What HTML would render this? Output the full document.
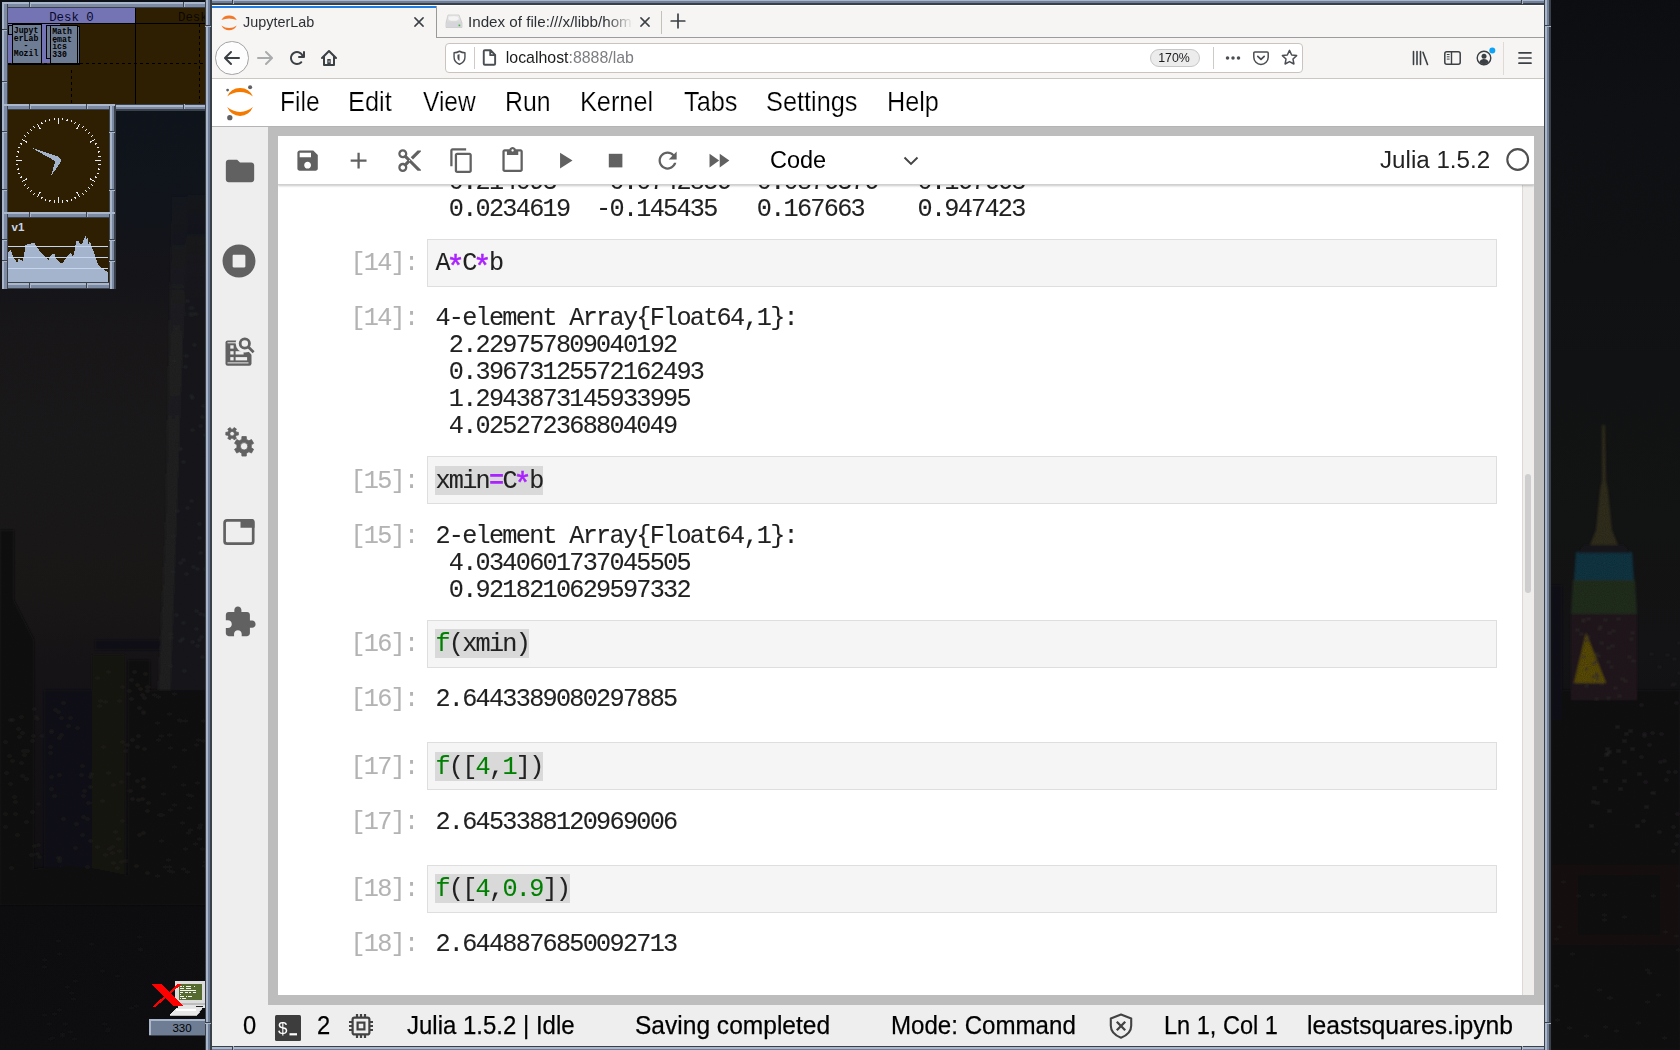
<!DOCTYPE html>
<html>
<head>
<meta charset="utf-8">
<title>JupyterLab</title>
<style>
*{box-sizing:border-box;margin:0;padding:0}
html,body{width:1680px;height:1050px;overflow:hidden}
body{position:relative;font-family:"Liberation Sans",sans-serif;background:#0d1116;}
.abs{position:absolute}
.ff{font-family:"Liberation Sans",sans-serif;white-space:pre;line-height:20px}
#bg{position:absolute;left:0;top:0;width:1680px;height:1050px;overflow:hidden;
 background:
  linear-gradient(to bottom,#0b1016 0px,#0d1217 250px,#14161a 420px,#1a1816 600px,#15151a 800px,#0c0d10 900px,#090a0c 1050px);}
/* fvwm frames */
.frame{position:absolute;background:#8796ad;}
.well{position:absolute;background:#2f1f02;}
/* window */
#win{position:absolute;left:205px;top:0;width:1346px;height:1050px;
 background:
  linear-gradient(to right,#3a4048 0 1px,#aab7ca 1px 3px,#71809a 3px 5px,#3a4048 5px 7px,transparent 7px) left/7px 100% no-repeat,
  linear-gradient(to right,#3a4048 0 1px,#aab7ca 1px 3px,#71809a 3px 5px,#3a4048 5px 7px) right/7px 100% no-repeat,
  linear-gradient(to bottom,#aab7ca 0 1px,#71809a 1px 3px,#3a4048 3px 5px,#fff 5px 6px,transparent 6px) top/100% 6px no-repeat,
  linear-gradient(to bottom,#3a4048 0 1px,#aab7ca 1px 3px,#71809a 3px 4px) bottom/100% 4px no-repeat,#fff;}
.nh{position:absolute;width:6px;height:2px;background:linear-gradient(to bottom,#3a4048 0 1px,#aab7ca 1px 2px)}
.nv{position:absolute;width:2px;height:4px;background:linear-gradient(to right,#3a4048 0 1px,#aab7ca 1px 2px)}
#content{position:absolute;left:7px;top:6px;width:1332px;height:1040px;background:#fff;overflow:hidden;will-change:transform}
#tabbar{position:absolute;left:0;top:0;width:1332px;height:32px;background:#f6f5f3;}
#navbar{position:absolute;left:0;top:32px;width:1332px;height:41px;background:#f6f5f3;border-bottom:1px solid #cdc7c2}
#menubar{position:absolute;left:0;top:73px;width:1332px;height:48px;background:#fff;border-bottom:1px solid #b4b4b4}
#dock{position:absolute;left:56px;top:121px;width:1276px;height:878px;background:#bdbdbd}
#side{position:absolute;left:0;top:121px;width:56px;height:878px;background:#eeeeee}
#panel{position:absolute;left:66px;top:130px;width:1256px;height:859px;background:#fff;overflow:hidden;will-change:transform}
#nbtool{position:absolute;left:0;top:0;width:1256px;height:49px;background:#fff;border-bottom:1px solid #d0d0d0;box-shadow:0 1px 2px rgba(0,0,0,.22);z-index:3}
#status{position:absolute;left:0;top:999px;width:1332px;height:41px;background:#eeeeee}
.mono{position:absolute;font-family:"Liberation Mono",monospace;font-size:25.2px;letter-spacing:-1.723px;-webkit-text-stroke:0.08px currentColor;white-space:pre;color:#212121;line-height:27px}
.mono.pr{color:#b3b3b3}
.mono b{font-weight:bold}
.mono b.star{display:inline-block;width:13.4px;height:20px;font-size:31px;line-height:20px;letter-spacing:0;text-indent:-2.6px;vertical-align:baseline;position:relative;top:6.5px;font-weight:normal;-webkit-text-stroke:0.5px currentColor}
.inp{position:absolute;left:149px;width:1070px;height:48px;background:#f5f5f5;border:1px solid #dedede}
.hl{position:absolute;background:#d9d9d9}
.op{color:#aa22ff;font-weight:bold}
.fn{color:#008000}
.menu{-webkit-text-stroke:0.22px #fff;position:absolute;top:7.8px;font-size:27.6px;color:#000;line-height:30px;white-space:pre;transform:scaleX(.9);transform-origin:0 0}
.st{-webkit-text-stroke:0.25px #000;position:absolute;top:5px;font-size:26.4px;color:#000;line-height:30px;white-space:pre;transform:scaleX(.9);transform-origin:0 0}
</style>
</head>
<body>
<div id="bg"><svg id="bgs" class="abs" style="left:0;top:0" width="1680" height="1050" viewBox="0 0 1680 1050">
<defs>
<linearGradient id="gl" x1="0" y1="0" x2="0" y2="1">
<stop offset="0" stop-color="#0a1018"/><stop offset=".1" stop-color="#0d151e"/><stop offset=".2" stop-color="#10151d"/><stop offset=".27" stop-color="#16151a"/><stop offset=".33" stop-color="#1a1819"/><stop offset=".42" stop-color="#1b1a1b"/><stop offset=".56" stop-color="#1b1917"/><stop offset=".64" stop-color="#161316"/><stop offset=".8" stop-color="#110f13"/><stop offset=".86" stop-color="#0b0b0e"/><stop offset="1" stop-color="#0c0c0f"/>
</linearGradient>
<linearGradient id="gr" x1="0" y1="0" x2="0" y2="1">
<stop offset="0" stop-color="#0a0c0f"/><stop offset=".1" stop-color="#0d0f12"/><stop offset=".35" stop-color="#101213"/><stop offset=".5" stop-color="#121313"/><stop offset=".62" stop-color="#131214"/><stop offset=".8" stop-color="#0e0e11"/><stop offset="1" stop-color="#0b0b0e"/>
</linearGradient>
<filter id="bl" x="-5%" y="-5%" width="110%" height="110%"><feGaussianBlur stdDeviation="1.200"/></filter>
<filter id="bl3" x="-50%" y="-100%" width="200%" height="300%"><feGaussianBlur stdDeviation="14"/></filter>
<linearGradient id="tw" gradientUnits="userSpaceOnUse" x1="0" y1="195" x2="0" y2="700"><stop offset="0" stop-color="#1c1d22" stop-opacity=".15"/><stop offset=".25" stop-color="#212124" stop-opacity=".9"/><stop offset="1" stop-color="#222223"/></linearGradient>
<linearGradient id="tw2" gradientUnits="userSpaceOnUse" x1="0" y1="195" x2="0" y2="700"><stop offset="0" stop-color="#16171c" stop-opacity=".15"/><stop offset=".25" stop-color="#18181b" stop-opacity=".9"/><stop offset="1" stop-color="#18181a"/></linearGradient>
<filter id="nz" x="0" y="0" width="100%" height="100%"><feTurbulence type="fractalNoise" baseFrequency="0.045 0.03" numOctaves="3" seed="7"/><feColorMatrix type="matrix" values="0 0 0 0 0.16  0 0 0 0 0.13  0 0 0 0 0.12  0.9 0.5 0 0 -0.52"/></filter>
<filter id="nz2" x="0" y="0" width="100%" height="100%" color-interpolation-filters="sRGB"><feTurbulence type="fractalNoise" baseFrequency="0.9" numOctaves="1" seed="2"/><feColorMatrix type="matrix" values="0 0 0 0 0.075  0 0 0 0 0.07  0 0 0 0 0.08  0 0 0 0.5 0"/></filter>
</defs>
<rect x="0" y="0" width="216" height="1050" fill="url(#gl)"/>
<rect x="1540" y="0" width="140" height="1050" fill="url(#gr)"/>
<g filter="url(#bl)">
<path d="M172 195L206 195L206 700L158 700L166 520Z" fill="url(#tw)"/>
<path d="M188 195L206 195L206 700L170 700Z" fill="url(#tw2)"/>
<path d="M0 530L14 530L14 600L34 640L34 900L0 900Z" fill="#0f0f11"/>
<path d="M44 690L92 690L92 900L44 900Z" fill="#100f12"/>
<path d="M92 655L125 655L125 900L92 900Z" fill="#131211"/>
<path d="M128 660L150 660L150 900L128 900Z" fill="#0f0e10"/>
<path d="M150 690L206 690L206 900L150 900Z" fill="#0e0e10"/>
<path d="M95 640L160 640L160 650L95 650Z" fill="#0f1115"/>
<rect x="11" y="719" width="3" height="2" fill="#23211f"/>
<rect x="17" y="728" width="3" height="2" fill="#23211f"/>
<rect x="5" y="772" width="3" height="2" fill="#23211f"/>
<rect x="37" y="844" width="3" height="2" fill="#23211f"/>
<rect x="31" y="740" width="3" height="2" fill="#23211f"/>
<rect x="22" y="750" width="3" height="2" fill="#23211f"/>
<rect x="9" y="719" width="3" height="2" fill="#23211f"/>
<rect x="10" y="867" width="3" height="2" fill="#23211f"/>
<rect x="33" y="845" width="3" height="2" fill="#23211f"/>
<rect x="32" y="735" width="3" height="2" fill="#23211f"/>
<rect x="14" y="813" width="3" height="2" fill="#23211f"/>
<rect x="30" y="854" width="3" height="2" fill="#23211f"/>
<rect x="35" y="716" width="3" height="2" fill="#23211f"/>
<rect x="25" y="821" width="3" height="2" fill="#23211f"/>
<rect x="21" y="732" width="3" height="2" fill="#23211f"/>
<rect x="20" y="716" width="3" height="2" fill="#23211f"/>
<rect x="38" y="856" width="3" height="2" fill="#23211f"/>
<rect x="23" y="754" width="3" height="2" fill="#23211f"/>
<rect x="37" y="803" width="3" height="2" fill="#23211f"/>
<rect x="36" y="853" width="3" height="2" fill="#23211f"/>
<rect x="21" y="775" width="3" height="2" fill="#23211f"/>
<rect x="25" y="778" width="3" height="2" fill="#23211f"/>
<rect x="8" y="755" width="3" height="2" fill="#23211f"/>
<rect x="33" y="708" width="3" height="2" fill="#23211f"/>
<rect x="4" y="813" width="3" height="2" fill="#23211f"/>
<rect x="13" y="796" width="3" height="2" fill="#23211f"/>
<rect x="20" y="762" width="3" height="2" fill="#23211f"/>
<rect x="40" y="735" width="3" height="2" fill="#23211f"/>
<rect x="18" y="736" width="3" height="2" fill="#23211f"/>
<rect x="26" y="750" width="3" height="2" fill="#23211f"/>
<rect x="16" y="834" width="3" height="2" fill="#23211f"/>
<rect x="14" y="801" width="3" height="2" fill="#23211f"/>
<rect x="36" y="718" width="3" height="2" fill="#23211f"/>
<rect x="4" y="741" width="3" height="2" fill="#23211f"/>
<rect x="31" y="811" width="3" height="2" fill="#23211f"/>
<rect x="11" y="760" width="3" height="2" fill="#23211f"/>
<rect x="9" y="783" width="3" height="2" fill="#23211f"/>
<rect x="4" y="826" width="3" height="2" fill="#23211f"/>
<rect x="36" y="872" width="3" height="2" fill="#23211f"/>
<rect x="30" y="873" width="3" height="2" fill="#23211f"/>
<rect x="49" y="752" width="3" height="2" fill="#22201e"/>
<rect x="89" y="840" width="3" height="2" fill="#22201e"/>
<rect x="65" y="870" width="3" height="2" fill="#22201e"/>
<rect x="74" y="847" width="3" height="2" fill="#22201e"/>
<rect x="60" y="734" width="3" height="2" fill="#22201e"/>
<rect x="67" y="725" width="3" height="2" fill="#22201e"/>
<rect x="64" y="873" width="3" height="2" fill="#22201e"/>
<rect x="62" y="702" width="3" height="2" fill="#22201e"/>
<rect x="50" y="731" width="3" height="2" fill="#22201e"/>
<rect x="81" y="765" width="3" height="2" fill="#22201e"/>
<rect x="60" y="717" width="3" height="2" fill="#22201e"/>
<rect x="89" y="776" width="3" height="2" fill="#22201e"/>
<rect x="57" y="711" width="3" height="2" fill="#22201e"/>
<rect x="50" y="730" width="3" height="2" fill="#22201e"/>
<rect x="76" y="727" width="3" height="2" fill="#22201e"/>
<rect x="50" y="788" width="3" height="2" fill="#22201e"/>
<rect x="58" y="880" width="3" height="2" fill="#22201e"/>
<rect x="53" y="795" width="3" height="2" fill="#22201e"/>
<rect x="80" y="774" width="3" height="2" fill="#22201e"/>
<rect x="89" y="786" width="3" height="2" fill="#22201e"/>
<rect x="58" y="774" width="3" height="2" fill="#22201e"/>
<rect x="50" y="776" width="3" height="2" fill="#22201e"/>
<rect x="58" y="860" width="3" height="2" fill="#22201e"/>
<rect x="83" y="790" width="3" height="2" fill="#22201e"/>
<rect x="49" y="746" width="3" height="2" fill="#22201e"/>
<rect x="58" y="737" width="3" height="2" fill="#22201e"/>
<rect x="58" y="857" width="3" height="2" fill="#22201e"/>
<rect x="54" y="709" width="3" height="2" fill="#22201e"/>
<rect x="87" y="802" width="3" height="2" fill="#22201e"/>
<rect x="90" y="773" width="3" height="2" fill="#22201e"/>
<rect x="86" y="818" width="3" height="2" fill="#22201e"/>
<rect x="81" y="834" width="3" height="2" fill="#22201e"/>
<rect x="69" y="717" width="3" height="2" fill="#22201e"/>
<rect x="57" y="857" width="3" height="2" fill="#22201e"/>
<rect x="86" y="866" width="3" height="2" fill="#22201e"/>
<rect x="62" y="818" width="3" height="2" fill="#22201e"/>
<rect x="82" y="816" width="3" height="2" fill="#22201e"/>
<rect x="82" y="795" width="3" height="2" fill="#22201e"/>
<rect x="75" y="823" width="3" height="2" fill="#22201e"/>
<rect x="59" y="866" width="3" height="2" fill="#22201e"/>
<rect x="146" y="686" width="3" height="2" fill="#25231f"/>
<rect x="146" y="872" width="3" height="2" fill="#25231f"/>
<rect x="130" y="679" width="3" height="2" fill="#25231f"/>
<rect x="143" y="697" width="3" height="2" fill="#25231f"/>
<rect x="146" y="810" width="3" height="2" fill="#25231f"/>
<rect x="98" y="705" width="3" height="2" fill="#25231f"/>
<rect x="129" y="790" width="3" height="2" fill="#25231f"/>
<rect x="135" y="865" width="3" height="2" fill="#25231f"/>
<rect x="107" y="671" width="3" height="2" fill="#25231f"/>
<rect x="144" y="673" width="3" height="2" fill="#25231f"/>
<rect x="141" y="694" width="3" height="2" fill="#25231f"/>
<rect x="138" y="834" width="3" height="2" fill="#25231f"/>
<rect x="142" y="786" width="3" height="2" fill="#25231f"/>
<rect x="142" y="712" width="3" height="2" fill="#25231f"/>
<rect x="131" y="739" width="3" height="2" fill="#25231f"/>
<rect x="142" y="832" width="3" height="2" fill="#25231f"/>
<rect x="120" y="781" width="3" height="2" fill="#25231f"/>
<rect x="96" y="677" width="3" height="2" fill="#25231f"/>
<rect x="127" y="773" width="3" height="2" fill="#25231f"/>
<rect x="141" y="798" width="3" height="2" fill="#25231f"/>
<rect x="102" y="746" width="3" height="2" fill="#25231f"/>
<rect x="136" y="780" width="3" height="2" fill="#25231f"/>
<rect x="96" y="846" width="3" height="2" fill="#25231f"/>
<rect x="139" y="688" width="3" height="2" fill="#25231f"/>
<rect x="124" y="750" width="3" height="2" fill="#25231f"/>
<rect x="137" y="735" width="3" height="2" fill="#25231f"/>
<rect x="107" y="772" width="3" height="2" fill="#25231f"/>
<rect x="146" y="690" width="3" height="2" fill="#25231f"/>
<rect x="101" y="800" width="3" height="2" fill="#25231f"/>
<rect x="142" y="778" width="3" height="2" fill="#25231f"/>
<rect x="118" y="850" width="3" height="2" fill="#25231f"/>
<rect x="136" y="684" width="3" height="2" fill="#25231f"/>
<rect x="142" y="711" width="3" height="2" fill="#25231f"/>
<rect x="111" y="846" width="3" height="2" fill="#25231f"/>
<rect x="117" y="838" width="3" height="2" fill="#25231f"/>
<rect x="104" y="854" width="3" height="2" fill="#25231f"/>
<rect x="104" y="701" width="3" height="2" fill="#25231f"/>
<rect x="121" y="741" width="3" height="2" fill="#25231f"/>
<rect x="124" y="860" width="3" height="2" fill="#25231f"/>
<rect x="133" y="671" width="3" height="2" fill="#25231f"/>
<rect x="112" y="784" width="3" height="2" fill="#25231f"/>
<rect x="121" y="820" width="3" height="2" fill="#25231f"/>
<rect x="121" y="686" width="3" height="2" fill="#25231f"/>
<rect x="108" y="848" width="3" height="2" fill="#25231f"/>
<rect x="114" y="831" width="3" height="2" fill="#25231f"/>
<rect x="147" y="802" width="3" height="2" fill="#25231f"/>
<rect x="131" y="798" width="3" height="2" fill="#25231f"/>
<rect x="112" y="862" width="3" height="2" fill="#25231f"/>
<rect x="120" y="861" width="3" height="2" fill="#25231f"/>
<rect x="111" y="852" width="3" height="2" fill="#25231f"/>
<rect x="137" y="799" width="3" height="2" fill="#25231f"/>
<rect x="118" y="700" width="3" height="2" fill="#25231f"/>
<rect x="136" y="746" width="3" height="2" fill="#25231f"/>
<rect x="130" y="698" width="3" height="2" fill="#25231f"/>
<rect x="99" y="700" width="3" height="2" fill="#25231f"/>
<rect x="138" y="707" width="3" height="2" fill="#25231f"/>
<rect x="143" y="748" width="3" height="2" fill="#25231f"/>
<rect x="126" y="744" width="3" height="2" fill="#25231f"/>
<rect x="128" y="690" width="3" height="2" fill="#25231f"/>
<rect x="116" y="867" width="3" height="2" fill="#25231f"/>
<rect x="161" y="814" width="3" height="2" fill="#1f1e1e"/>
<rect x="169" y="747" width="3" height="2" fill="#1f1e1e"/>
<rect x="153" y="694" width="3" height="2" fill="#1f1e1e"/>
<rect x="201" y="848" width="3" height="2" fill="#1f1e1e"/>
<rect x="194" y="843" width="3" height="2" fill="#1f1e1e"/>
<rect x="202" y="720" width="3" height="2" fill="#1f1e1e"/>
<rect x="182" y="784" width="3" height="2" fill="#1f1e1e"/>
<rect x="182" y="868" width="3" height="2" fill="#1f1e1e"/>
<rect x="192" y="874" width="3" height="2" fill="#1f1e1e"/>
<rect x="158" y="814" width="3" height="2" fill="#1f1e1e"/>
<rect x="187" y="832" width="3" height="2" fill="#1f1e1e"/>
<rect x="184" y="848" width="3" height="2" fill="#1f1e1e"/>
<rect x="168" y="866" width="3" height="2" fill="#1f1e1e"/>
<rect x="173" y="804" width="3" height="2" fill="#1f1e1e"/>
<rect x="199" y="824" width="3" height="2" fill="#1f1e1e"/>
<rect x="168" y="734" width="3" height="2" fill="#1f1e1e"/>
<rect x="169" y="809" width="3" height="2" fill="#1f1e1e"/>
<rect x="204" y="861" width="3" height="2" fill="#1f1e1e"/>
<rect x="173" y="766" width="3" height="2" fill="#1f1e1e"/>
<rect x="195" y="744" width="3" height="2" fill="#1f1e1e"/>
<rect x="173" y="693" width="3" height="2" fill="#1f1e1e"/>
<rect x="162" y="793" width="3" height="2" fill="#1f1e1e"/>
<rect x="188" y="807" width="3" height="2" fill="#1f1e1e"/>
<rect x="171" y="871" width="3" height="2" fill="#1f1e1e"/>
<rect x="184" y="720" width="3" height="2" fill="#1f1e1e"/>
<rect x="156" y="875" width="3" height="2" fill="#1f1e1e"/>
<rect x="203" y="865" width="3" height="2" fill="#1f1e1e"/>
<rect x="183" y="749" width="3" height="2" fill="#1f1e1e"/>
<rect x="157" y="739" width="3" height="2" fill="#1f1e1e"/>
<rect x="164" y="866" width="3" height="2" fill="#1f1e1e"/>
<rect x="198" y="838" width="3" height="2" fill="#1f1e1e"/>
<rect x="160" y="735" width="3" height="2" fill="#1f1e1e"/>
<rect x="168" y="870" width="3" height="2" fill="#1f1e1e"/>
<rect x="160" y="840" width="3" height="2" fill="#1f1e1e"/>
<rect x="187" y="794" width="3" height="2" fill="#1f1e1e"/>
<rect x="202" y="740" width="3" height="2" fill="#1f1e1e"/>
<rect x="179" y="720" width="3" height="2" fill="#1f1e1e"/>
<rect x="157" y="696" width="3" height="2" fill="#1f1e1e"/>
<rect x="168" y="713" width="3" height="2" fill="#1f1e1e"/>
<rect x="155" y="879" width="3" height="2" fill="#1f1e1e"/>
<rect x="167" y="859" width="3" height="2" fill="#1f1e1e"/>
<rect x="189" y="829" width="3" height="2" fill="#1f1e1e"/>
<rect x="186" y="871" width="3" height="2" fill="#1f1e1e"/>
<rect x="198" y="827" width="3" height="2" fill="#1f1e1e"/>
<rect x="181" y="822" width="3" height="2" fill="#1f1e1e"/>
<rect x="190" y="795" width="3" height="2" fill="#1f1e1e"/>
<rect x="178" y="719" width="3" height="2" fill="#1f1e1e"/>
<rect x="196" y="782" width="3" height="2" fill="#1f1e1e"/>
<rect x="156" y="722" width="3" height="2" fill="#1f1e1e"/>
<rect x="197" y="739" width="3" height="2" fill="#1f1e1e"/>
<rect x="182" y="559" width="3" height="2" fill="#282929"/>
<rect x="199" y="425" width="3" height="2" fill="#282929"/>
<rect x="182" y="461" width="3" height="2" fill="#282929"/>
<rect x="169" y="633" width="3" height="2" fill="#282929"/>
<rect x="169" y="665" width="3" height="2" fill="#282929"/>
<rect x="173" y="360" width="3" height="2" fill="#282929"/>
<rect x="199" y="613" width="3" height="2" fill="#282929"/>
<rect x="176" y="510" width="3" height="2" fill="#282929"/>
<rect x="185" y="573" width="3" height="2" fill="#282929"/>
<rect x="175" y="614" width="3" height="2" fill="#282929"/>
<rect x="204" y="568" width="3" height="2" fill="#282929"/>
<rect x="201" y="656" width="3" height="2" fill="#282929"/>
<rect x="182" y="622" width="3" height="2" fill="#282929"/>
<rect x="198" y="523" width="3" height="2" fill="#282929"/>
<rect x="172" y="535" width="3" height="2" fill="#282929"/>
<rect x="201" y="416" width="3" height="2" fill="#282929"/>
<rect x="191" y="641" width="3" height="2" fill="#282929"/>
<rect x="190" y="314" width="3" height="2" fill="#282929"/>
<rect x="191" y="397" width="3" height="2" fill="#282929"/>
<rect x="199" y="552" width="3" height="2" fill="#282929"/>
<rect x="179" y="640" width="3" height="2" fill="#282929"/>
<rect x="191" y="429" width="3" height="2" fill="#282929"/>
<rect x="198" y="639" width="3" height="2" fill="#282929"/>
<rect x="200" y="636" width="3" height="2" fill="#282929"/>
<rect x="192" y="566" width="3" height="2" fill="#282929"/>
<rect x="190" y="500" width="3" height="2" fill="#282929"/>
<rect x="204" y="434" width="3" height="2" fill="#282929"/>
<rect x="171" y="571" width="3" height="2" fill="#282929"/>
<rect x="186" y="507" width="3" height="2" fill="#282929"/>
<rect x="190" y="395" width="3" height="2" fill="#282929"/>
<rect x="175" y="327" width="3" height="2" fill="#282929"/>
<rect x="196" y="645" width="3" height="2" fill="#282929"/>
<rect x="193" y="344" width="3" height="2" fill="#282929"/>
<rect x="203" y="614" width="3" height="2" fill="#282929"/>
<rect x="186" y="300" width="3" height="2" fill="#282929"/>
<rect x="198" y="537" width="3" height="2" fill="#282929"/>
<rect x="190" y="307" width="3" height="2" fill="#282929"/>
<rect x="194" y="313" width="3" height="2" fill="#282929"/>
<rect x="185" y="355" width="3" height="2" fill="#282929"/>
<rect x="181" y="638" width="3" height="2" fill="#282929"/>
<rect x="195" y="610" width="3" height="2" fill="#282929"/>
<rect x="179" y="448" width="3" height="2" fill="#282929"/>
<rect x="190" y="313" width="3" height="2" fill="#282929"/>
<rect x="183" y="670" width="3" height="2" fill="#282929"/>
<rect x="195" y="628" width="3" height="2" fill="#282929"/>
<rect x="179" y="562" width="3" height="2" fill="#282929"/>
<rect x="196" y="568" width="3" height="2" fill="#282929"/>
<rect x="184" y="366" width="3" height="2" fill="#282929"/>
<rect x="169" y="637" width="3" height="2" fill="#282929"/>
<rect x="202" y="405" width="3" height="2" fill="#282929"/>
<rect x="116" y="975" width="3" height="2" fill="#151516"/>
<rect x="103" y="1023" width="3" height="2" fill="#151516"/>
<rect x="72" y="998" width="3" height="2" fill="#151516"/>
<rect x="66" y="986" width="3" height="2" fill="#151516"/>
<rect x="43" y="959" width="3" height="2" fill="#151516"/>
<rect x="69" y="1031" width="3" height="2" fill="#151516"/>
<rect x="53" y="1013" width="3" height="2" fill="#151516"/>
<rect x="49" y="1038" width="3" height="2" fill="#151516"/>
<rect x="57" y="940" width="3" height="2" fill="#151516"/>
<rect x="61" y="1033" width="3" height="2" fill="#151516"/>
<rect x="107" y="1028" width="3" height="2" fill="#151516"/>
<rect x="90" y="943" width="3" height="2" fill="#151516"/>
<rect x="74" y="980" width="3" height="2" fill="#151516"/>
<rect x="139" y="948" width="3" height="2" fill="#151516"/>
<rect x="64" y="1023" width="3" height="2" fill="#151516"/>
<rect x="51" y="1037" width="3" height="2" fill="#151516"/>
<rect x="70" y="992" width="3" height="2" fill="#151516"/>
<rect x="106" y="1030" width="3" height="2" fill="#151516"/>
<rect x="48" y="1023" width="3" height="2" fill="#151516"/>
<rect x="58" y="1009" width="3" height="2" fill="#151516"/>
<rect x="43" y="1014" width="3" height="2" fill="#151516"/>
<rect x="58" y="953" width="3" height="2" fill="#151516"/>
<rect x="43" y="966" width="3" height="2" fill="#151516"/>
<rect x="73" y="1038" width="3" height="2" fill="#151516"/>
<rect x="101" y="970" width="3" height="2" fill="#151516"/>
<rect x="139" y="949" width="3" height="2" fill="#151516"/>
<rect x="61" y="1035" width="3" height="2" fill="#151516"/>
<rect x="135" y="1005" width="3" height="2" fill="#151516"/>
<rect x="138" y="936" width="3" height="2" fill="#151516"/>
<rect x="130" y="1007" width="3" height="2" fill="#151516"/>
<path d="M0 875Q60 860 110 872T206 868L206 905L0 905Z" fill="#09090b"/>
</g>
<g filter="url(#bl)">
<path d="M1551 690L1680 690L1680 1050L1551 1050Z" fill="#0d0d10"/>
<path d="M1602 425L1605 425L1606 480L1608 490L1612 530L1618 545L1590 545L1596 530L1600 490L1602 480Z" fill="#35301f"/>
<path d="M1576 552L1632 552L1634 580L1574 580Z" fill="#113a4c"/>
<path d="M1573 580L1635 580L1637 614L1571 614Z" fill="#22331e"/>
<path d="M1571 614L1637 614L1637 700L1571 700Z" fill="#20161a"/>
<path d="M1584 545L1624 545L1630 553L1578 553Z" fill="#15181b"/>
<path d="M1586 633L1574 683L1606 683Z" fill="#665402"/>
<path d="M1551 585L1562 585L1562 720L1551 720Z" fill="#0c0e12"/>
<path d="M1580 700L1660 700L1660 840L1580 840Z" fill="#0c0d0f"/>
<path d="M1551 865L1680 865L1680 945L1551 945Z" fill="#121110"/>
<path d="M1578 875L1660 875L1660 935L1578 935Z" fill="#0d0e0f"/>
<rect x="1614" y="687" width="3" height="2" fill="#322d2c"/>
<rect x="1580" y="633" width="3" height="2" fill="#322d2c"/>
<rect x="1582" y="656" width="3" height="2" fill="#322d2c"/>
<rect x="1607" y="661" width="3" height="2" fill="#322d2c"/>
<rect x="1596" y="678" width="3" height="2" fill="#322d2c"/>
<rect x="1624" y="680" width="3" height="2" fill="#322d2c"/>
<rect x="1576" y="629" width="3" height="2" fill="#322d2c"/>
<rect x="1587" y="636" width="3" height="2" fill="#322d2c"/>
<rect x="1608" y="632" width="3" height="2" fill="#322d2c"/>
<rect x="1611" y="645" width="3" height="2" fill="#322d2c"/>
<rect x="1596" y="675" width="3" height="2" fill="#322d2c"/>
<rect x="1631" y="632" width="3" height="2" fill="#322d2c"/>
<rect x="1595" y="698" width="3" height="2" fill="#322d2c"/>
<rect x="1587" y="618" width="3" height="2" fill="#322d2c"/>
<rect x="1585" y="685" width="3" height="2" fill="#322d2c"/>
<rect x="1618" y="695" width="3" height="2" fill="#322d2c"/>
<rect x="1604" y="619" width="3" height="2" fill="#322d2c"/>
<rect x="1592" y="676" width="3" height="2" fill="#322d2c"/>
<rect x="1598" y="628" width="3" height="2" fill="#322d2c"/>
<rect x="1597" y="655" width="3" height="2" fill="#322d2c"/>
<rect x="1595" y="653" width="3" height="2" fill="#322d2c"/>
<rect x="1582" y="619" width="3" height="2" fill="#322d2c"/>
<rect x="1621" y="678" width="3" height="2" fill="#322d2c"/>
<rect x="1599" y="626" width="3" height="2" fill="#322d2c"/>
<rect x="1592" y="663" width="3" height="2" fill="#322d2c"/>
<rect x="1628" y="656" width="3" height="2" fill="#322d2c"/>
<rect x="1632" y="660" width="3" height="2" fill="#322d2c"/>
<rect x="1585" y="668" width="3" height="2" fill="#322d2c"/>
<rect x="1610" y="666" width="3" height="2" fill="#322d2c"/>
<rect x="1617" y="618" width="3" height="2" fill="#322d2c"/>
<rect x="1600" y="683" width="3" height="2" fill="#322d2c"/>
<rect x="1582" y="620" width="3" height="2" fill="#322d2c"/>
<rect x="1585" y="640" width="3" height="2" fill="#322d2c"/>
<rect x="1600" y="642" width="3" height="2" fill="#322d2c"/>
<rect x="1612" y="630" width="3" height="2" fill="#322d2c"/>
<rect x="1595" y="673" width="3" height="2" fill="#322d2c"/>
<rect x="1607" y="697" width="3" height="2" fill="#322d2c"/>
<rect x="1630" y="638" width="3" height="2" fill="#322d2c"/>
<rect x="1594" y="661" width="3" height="2" fill="#322d2c"/>
<rect x="1607" y="647" width="3" height="2" fill="#322d2c"/>
<rect x="1673" y="683" width="3" height="2" fill="#262425"/>
<rect x="1658" y="666" width="3" height="2" fill="#262425"/>
<rect x="1674" y="771" width="3" height="2" fill="#262425"/>
<rect x="1678" y="672" width="3" height="2" fill="#262425"/>
<rect x="1667" y="771" width="3" height="2" fill="#262425"/>
<rect x="1642" y="820" width="3" height="2" fill="#262425"/>
<rect x="1673" y="658" width="3" height="2" fill="#262425"/>
<rect x="1676" y="813" width="3" height="2" fill="#262425"/>
<rect x="1663" y="760" width="3" height="2" fill="#262425"/>
<rect x="1650" y="653" width="3" height="2" fill="#262425"/>
<rect x="1658" y="831" width="3" height="2" fill="#262425"/>
<rect x="1648" y="744" width="3" height="2" fill="#262425"/>
<rect x="1651" y="792" width="3" height="2" fill="#262425"/>
<rect x="1676" y="835" width="3" height="2" fill="#262425"/>
<rect x="1651" y="732" width="3" height="2" fill="#262425"/>
<rect x="1640" y="756" width="3" height="2" fill="#262425"/>
<rect x="1672" y="826" width="3" height="2" fill="#262425"/>
<rect x="1643" y="735" width="3" height="2" fill="#262425"/>
<rect x="1643" y="733" width="3" height="2" fill="#262425"/>
<rect x="1675" y="702" width="3" height="2" fill="#262425"/>
<rect x="1672" y="850" width="3" height="2" fill="#262425"/>
<rect x="1671" y="684" width="3" height="2" fill="#262425"/>
<rect x="1675" y="843" width="3" height="2" fill="#262425"/>
<rect x="1678" y="642" width="3" height="2" fill="#262425"/>
<rect x="1640" y="704" width="3" height="2" fill="#262425"/>
<rect x="1660" y="733" width="3" height="2" fill="#262425"/>
<rect x="1644" y="781" width="3" height="2" fill="#262425"/>
<rect x="1665" y="779" width="3" height="2" fill="#262425"/>
<rect x="1659" y="761" width="3" height="2" fill="#262425"/>
<rect x="1666" y="654" width="3" height="2" fill="#262425"/>
<rect x="1616" y="726" width="3" height="2" fill="#292a2c"/>
<rect x="1592" y="801" width="3" height="2" fill="#292a2c"/>
<rect x="1608" y="751" width="3" height="2" fill="#292a2c"/>
<rect x="1604" y="780" width="3" height="2" fill="#292a2c"/>
<rect x="1593" y="787" width="3" height="2" fill="#292a2c"/>
<rect x="1590" y="825" width="3" height="2" fill="#292a2c"/>
<rect x="1596" y="802" width="3" height="2" fill="#292a2c"/>
<rect x="1623" y="761" width="3" height="2" fill="#292a2c"/>
<rect x="1606" y="753" width="3" height="2" fill="#292a2c"/>
<rect x="1638" y="773" width="3" height="2" fill="#292a2c"/>
<rect x="1623" y="740" width="3" height="2" fill="#292a2c"/>
<rect x="1629" y="730" width="3" height="2" fill="#292a2c"/>
<rect x="1619" y="788" width="3" height="2" fill="#292a2c"/>
<rect x="1623" y="780" width="3" height="2" fill="#292a2c"/>
<rect x="1625" y="733" width="3" height="2" fill="#292a2c"/>
<rect x="1652" y="792" width="3" height="2" fill="#292a2c"/>
<rect x="1636" y="825" width="3" height="2" fill="#292a2c"/>
<rect x="1617" y="750" width="3" height="2" fill="#292a2c"/>
<rect x="1606" y="748" width="3" height="2" fill="#292a2c"/>
<rect x="1606" y="748" width="3" height="2" fill="#292a2c"/>
<rect x="1600" y="768" width="3" height="2" fill="#292a2c"/>
<rect x="1605" y="754" width="3" height="2" fill="#292a2c"/>
<rect x="1631" y="748" width="3" height="2" fill="#292a2c"/>
<rect x="1645" y="806" width="3" height="2" fill="#292a2c"/>
<rect x="1608" y="810" width="3" height="2" fill="#292a2c"/>
<rect x="1577" y="895" width="3" height="2" fill="#1f1f1e"/>
<rect x="1677" y="885" width="3" height="2" fill="#1f1f1e"/>
<rect x="1556" y="1019" width="3" height="2" fill="#1f1f1e"/>
<rect x="1555" y="985" width="3" height="2" fill="#1f1f1e"/>
<rect x="1623" y="916" width="3" height="2" fill="#1f1f1e"/>
<rect x="1585" y="1035" width="3" height="2" fill="#1f1f1e"/>
<rect x="1603" y="919" width="3" height="2" fill="#1f1f1e"/>
<rect x="1609" y="997" width="3" height="2" fill="#1f1f1e"/>
<rect x="1591" y="894" width="3" height="2" fill="#1f1f1e"/>
<rect x="1652" y="895" width="3" height="2" fill="#1f1f1e"/>
<rect x="1562" y="881" width="3" height="2" fill="#1f1f1e"/>
<rect x="1677" y="949" width="3" height="2" fill="#1f1f1e"/>
<rect x="1646" y="969" width="3" height="2" fill="#1f1f1e"/>
<rect x="1675" y="935" width="3" height="2" fill="#1f1f1e"/>
<rect x="1598" y="989" width="3" height="2" fill="#1f1f1e"/>
<rect x="1555" y="938" width="3" height="2" fill="#1f1f1e"/>
<rect x="1648" y="972" width="3" height="2" fill="#1f1f1e"/>
<rect x="1615" y="1030" width="3" height="2" fill="#1f1f1e"/>
<rect x="1608" y="997" width="3" height="2" fill="#1f1f1e"/>
<rect x="1603" y="894" width="3" height="2" fill="#1f1f1e"/>
<rect x="1603" y="914" width="3" height="2" fill="#1f1f1e"/>
<rect x="1558" y="926" width="3" height="2" fill="#1f1f1e"/>
<rect x="1571" y="953" width="3" height="2" fill="#1f1f1e"/>
<rect x="1646" y="1001" width="3" height="2" fill="#1f1f1e"/>
<rect x="1664" y="931" width="3" height="2" fill="#1f1f1e"/>
<rect x="1637" y="1022" width="3" height="2" fill="#1f1f1e"/>
<rect x="1604" y="1026" width="3" height="2" fill="#1f1f1e"/>
<rect x="1568" y="1027" width="3" height="2" fill="#1f1f1e"/>
<rect x="1663" y="1037" width="3" height="2" fill="#1f1f1e"/>
<rect x="1657" y="994" width="3" height="2" fill="#1f1f1e"/>
</g>
<rect x="0" y="0" width="216" height="1050" filter="url(#nz2)"/><rect x="1540" y="0" width="140" height="1050" filter="url(#nz2)"/>
</svg><!--/bgs--></div>
<svg id="desk" class="abs" style="left:0;top:0" width="216" height="1050" viewBox="0 0 216 1050" shape-rendering="crispEdges">
<rect x="8.00" y="8.00" width="198.00" height="96.00" fill="#2f1f02"/>
<rect x="2.00" y="2.00" width="210.00" height="2.00" fill="#aab7ca"/>
<rect x="2.00" y="4.00" width="210.00" height="2.50" fill="#7c8ba3"/>
<rect x="2.00" y="6.50" width="210.00" height="1.50" fill="#3b424c"/>
<rect x="2.00" y="103.50" width="210.50" height="1.00" fill="#3b424c"/>
<rect x="2.00" y="104.50" width="210.50" height="2.00" fill="#aab7ca"/>
<rect x="2.00" y="106.50" width="210.50" height="2.50" fill="#7c8ba3"/>
<rect x="2.00" y="109.00" width="210.50" height="1.50" fill="#3b424c"/>
<rect x="2.00" y="2.00" width="2.00" height="108.00" fill="#aab7ca"/>
<rect x="4.00" y="2.00" width="2.50" height="108.00" fill="#7c8ba3"/>
<rect x="6.50" y="2.00" width="1.50" height="108.00" fill="#3b424c"/>
<rect x="206.00" y="2.00" width="1.00" height="108.00" fill="#3b424c"/>
<rect x="207.00" y="2.00" width="2.00" height="108.00" fill="#aab7ca"/>
<rect x="209.00" y="2.00" width="2.00" height="108.00" fill="#7c8ba3"/>
<rect x="211.00" y="2.00" width="1.50" height="108.00" fill="#3b424c"/>
<rect x="2.00" y="2.00" width="210.00" height="2.00" fill="#aab7ca"/>
<rect x="2.00" y="2.00" width="2.00" height="108.00" fill="#aab7ca"/>
<rect x="29.00" y="2.00" width="1.00" height="5.00" fill="#3b424c"/>
<rect x="30.00" y="2.00" width="1.00" height="5.00" fill="#aab7ca"/>
<rect x="29.00" y="104.00" width="1.00" height="5.00" fill="#3b424c"/>
<rect x="30.00" y="104.00" width="1.00" height="5.00" fill="#aab7ca"/>
<rect x="183.00" y="2.00" width="1.00" height="5.00" fill="#3b424c"/>
<rect x="184.00" y="2.00" width="1.00" height="5.00" fill="#aab7ca"/>
<rect x="183.00" y="104.00" width="1.00" height="5.00" fill="#3b424c"/>
<rect x="184.00" y="104.00" width="1.00" height="5.00" fill="#aab7ca"/>
<rect x="2.00" y="29.00" width="5.00" height="1.00" fill="#3b424c"/>
<rect x="2.00" y="30.00" width="5.00" height="1.00" fill="#aab7ca"/>
<rect x="206.00" y="29.00" width="6.00" height="1.00" fill="#3b424c"/>
<rect x="206.00" y="30.00" width="6.00" height="1.00" fill="#aab7ca"/>
<rect x="2.00" y="81.00" width="5.00" height="1.00" fill="#3b424c"/>
<rect x="2.00" y="82.00" width="5.00" height="1.00" fill="#aab7ca"/>
<rect x="206.00" y="81.00" width="6.00" height="1.00" fill="#3b424c"/>
<rect x="206.00" y="82.00" width="6.00" height="1.00" fill="#aab7ca"/>
<rect x="8.00" y="110.00" width="101.00" height="102.00" fill="#2f1f02"/>
<rect x="2.00" y="104.00" width="113.00" height="2.00" fill="#aab7ca"/>
<rect x="2.00" y="106.00" width="113.00" height="2.50" fill="#7c8ba3"/>
<rect x="2.00" y="108.50" width="113.00" height="1.50" fill="#3b424c"/>
<rect x="2.00" y="211.50" width="113.50" height="1.00" fill="#3b424c"/>
<rect x="2.00" y="212.50" width="113.50" height="2.00" fill="#aab7ca"/>
<rect x="2.00" y="214.50" width="113.50" height="2.50" fill="#7c8ba3"/>
<rect x="2.00" y="217.00" width="113.50" height="1.50" fill="#3b424c"/>
<rect x="2.00" y="104.00" width="2.00" height="114.00" fill="#aab7ca"/>
<rect x="4.00" y="104.00" width="2.50" height="114.00" fill="#7c8ba3"/>
<rect x="6.50" y="104.00" width="1.50" height="114.00" fill="#3b424c"/>
<rect x="109.00" y="104.00" width="1.00" height="114.00" fill="#3b424c"/>
<rect x="110.00" y="104.00" width="2.00" height="114.00" fill="#aab7ca"/>
<rect x="112.00" y="104.00" width="2.00" height="114.00" fill="#7c8ba3"/>
<rect x="114.00" y="104.00" width="1.50" height="114.00" fill="#3b424c"/>
<rect x="2.00" y="104.00" width="113.00" height="2.00" fill="#aab7ca"/>
<rect x="2.00" y="104.00" width="2.00" height="114.00" fill="#aab7ca"/>
<rect x="29.00" y="104.00" width="1.00" height="5.00" fill="#3b424c"/>
<rect x="30.00" y="104.00" width="1.00" height="5.00" fill="#aab7ca"/>
<rect x="29.00" y="212.00" width="1.00" height="5.00" fill="#3b424c"/>
<rect x="30.00" y="212.00" width="1.00" height="5.00" fill="#aab7ca"/>
<rect x="86.00" y="104.00" width="1.00" height="5.00" fill="#3b424c"/>
<rect x="87.00" y="104.00" width="1.00" height="5.00" fill="#aab7ca"/>
<rect x="86.00" y="212.00" width="1.00" height="5.00" fill="#3b424c"/>
<rect x="87.00" y="212.00" width="1.00" height="5.00" fill="#aab7ca"/>
<rect x="2.00" y="131.00" width="5.00" height="1.00" fill="#3b424c"/>
<rect x="2.00" y="132.00" width="5.00" height="1.00" fill="#aab7ca"/>
<rect x="109.00" y="131.00" width="6.00" height="1.00" fill="#3b424c"/>
<rect x="109.00" y="132.00" width="6.00" height="1.00" fill="#aab7ca"/>
<rect x="2.00" y="189.00" width="5.00" height="1.00" fill="#3b424c"/>
<rect x="2.00" y="190.00" width="5.00" height="1.00" fill="#aab7ca"/>
<rect x="109.00" y="189.00" width="6.00" height="1.00" fill="#3b424c"/>
<rect x="109.00" y="190.00" width="6.00" height="1.00" fill="#aab7ca"/>
<rect x="8.00" y="218.00" width="101.00" height="64.50" fill="#2f1f02"/>
<rect x="2.00" y="212.00" width="113.00" height="2.00" fill="#aab7ca"/>
<rect x="2.00" y="214.00" width="113.00" height="2.50" fill="#7c8ba3"/>
<rect x="2.00" y="216.50" width="113.00" height="1.50" fill="#3b424c"/>
<rect x="2.00" y="282.00" width="113.50" height="1.00" fill="#3b424c"/>
<rect x="2.00" y="283.00" width="113.50" height="2.00" fill="#aab7ca"/>
<rect x="2.00" y="285.00" width="113.50" height="2.50" fill="#7c8ba3"/>
<rect x="2.00" y="287.50" width="113.50" height="1.50" fill="#3b424c"/>
<rect x="2.00" y="212.00" width="2.00" height="76.50" fill="#aab7ca"/>
<rect x="4.00" y="212.00" width="2.50" height="76.50" fill="#7c8ba3"/>
<rect x="6.50" y="212.00" width="1.50" height="76.50" fill="#3b424c"/>
<rect x="109.00" y="212.00" width="1.00" height="76.50" fill="#3b424c"/>
<rect x="110.00" y="212.00" width="2.00" height="76.50" fill="#aab7ca"/>
<rect x="112.00" y="212.00" width="2.00" height="76.50" fill="#7c8ba3"/>
<rect x="114.00" y="212.00" width="1.50" height="76.50" fill="#3b424c"/>
<rect x="2.00" y="212.00" width="113.00" height="2.00" fill="#aab7ca"/>
<rect x="2.00" y="212.00" width="2.00" height="76.50" fill="#aab7ca"/>
<rect x="29.00" y="212.00" width="1.00" height="5.00" fill="#3b424c"/>
<rect x="30.00" y="212.00" width="1.00" height="5.00" fill="#aab7ca"/>
<rect x="29.00" y="282.50" width="1.00" height="5.00" fill="#3b424c"/>
<rect x="30.00" y="282.50" width="1.00" height="5.00" fill="#aab7ca"/>
<rect x="86.00" y="212.00" width="1.00" height="5.00" fill="#3b424c"/>
<rect x="87.00" y="212.00" width="1.00" height="5.00" fill="#aab7ca"/>
<rect x="86.00" y="282.50" width="1.00" height="5.00" fill="#3b424c"/>
<rect x="87.00" y="282.50" width="1.00" height="5.00" fill="#aab7ca"/>
<rect x="2.00" y="239.00" width="5.00" height="1.00" fill="#3b424c"/>
<rect x="2.00" y="240.00" width="5.00" height="1.00" fill="#aab7ca"/>
<rect x="109.00" y="239.00" width="6.00" height="1.00" fill="#3b424c"/>
<rect x="109.00" y="240.00" width="6.00" height="1.00" fill="#aab7ca"/>
<rect x="2.00" y="259.50" width="5.00" height="1.00" fill="#3b424c"/>
<rect x="2.00" y="260.50" width="5.00" height="1.00" fill="#aab7ca"/>
<rect x="109.00" y="259.50" width="6.00" height="1.00" fill="#3b424c"/>
<rect x="109.00" y="260.50" width="6.00" height="1.00" fill="#aab7ca"/>
<rect x="8.00" y="8.00" width="127.00" height="15.00" fill="#7474b4"/>
<rect x="8.00" y="23.00" width="198.00" height="1.20" fill="#000"/>
<rect x="135.00" y="8.00" width="1.20" height="96.00" fill="#000"/>
<rect x="8.00" y="24.20" width="42.50" height="39.00" fill="#7474b4"/>
<rect x="50.00" y="24.20" width="10.00" height="1.00" fill="#7474b4"/>
<path d="M8 63.500H206M71.500 64V103M199.500 24V103" stroke="#000" stroke-width="1" stroke-dasharray="3 3" fill="none"/>
<rect x="8.500" y="25" width="3.500" height="9" fill="#6e7d93" stroke="#000" stroke-width="1"/>
<rect x="12.500" y="24.500" width="29" height="39" fill="#6e7d93" stroke="#000" stroke-width="1"/>
<rect x="46.500" y="25.500" width="4" height="33" fill="#6e7d93" stroke="#000" stroke-width="1"/>
<rect x="77" y="26.500" width="2.500" height="36.500" fill="#6e7d93" stroke="#000" stroke-width="1"/>
<rect x="50.500" y="25.500" width="27" height="38" fill="#6e7d93" stroke="#000" stroke-width="1"/>
<rect x="8.00" y="63.50" width="72.00" height="1.00" fill="#000"/>
<rect x="8.00" y="64.50" width="72.00" height="3.00" fill="#2f1f02"/>
<text x="13.8" y="33.0" font-family="Liberation Mono" font-size="8.300" font-weight="bold" fill="#000" xml:space="preserve" textLength="24.5" lengthAdjust="spacingAndGlyphs">Jupyt</text>
<text x="13.8" y="40.7" font-family="Liberation Mono" font-size="8.300" font-weight="bold" fill="#000" xml:space="preserve" textLength="24.5" lengthAdjust="spacingAndGlyphs">erLab</text>
<text x="13.8" y="48.4" font-family="Liberation Mono" font-size="8.300" font-weight="bold" fill="#000" xml:space="preserve" textLength="14.7" lengthAdjust="spacingAndGlyphs">  -</text>
<text x="13.8" y="56.1" font-family="Liberation Mono" font-size="8.300" font-weight="bold" fill="#000" xml:space="preserve" textLength="24.5" lengthAdjust="spacingAndGlyphs">Mozil</text>
<text x="52.2" y="33.8" font-family="Liberation Mono" font-size="8.300" font-weight="bold" fill="#000" xml:space="preserve" textLength="19.6" lengthAdjust="spacingAndGlyphs">Math</text>
<text x="52.2" y="41.5" font-family="Liberation Mono" font-size="8.300" font-weight="bold" fill="#000" xml:space="preserve" textLength="19.6" lengthAdjust="spacingAndGlyphs">emat</text>
<text x="52.2" y="49.2" font-family="Liberation Mono" font-size="8.300" font-weight="bold" fill="#000" xml:space="preserve" textLength="14.7" lengthAdjust="spacingAndGlyphs">ics</text>
<text x="52.2" y="56.9" font-family="Liberation Mono" font-size="8.300" font-weight="bold" fill="#000" xml:space="preserve" textLength="14.7" lengthAdjust="spacingAndGlyphs">330</text>
<text x="71.500" y="20.600" font-family="Liberation Mono" font-size="12.400" fill="#0a0a30" text-anchor="middle">Desk 0</text>
<text x="178" y="20.600" font-family="Liberation Mono" font-size="12.400" fill="#0c0800">Desk 1</text>
<path d="M58.50 124.00L58.50 118.00M62.70 120.52L62.94 118.23M66.86 121.18L67.34 118.93M70.92 122.27L71.63 120.08M74.85 123.78L75.79 121.67M76.75 128.89L79.75 123.69M82.13 127.98L83.48 126.12M85.40 130.63L86.94 128.92M88.37 133.60L90.08 132.06M91.02 136.87L92.88 135.52M90.11 142.25L95.31 139.25M95.22 144.15L97.33 143.21M96.73 148.08L98.92 147.37M97.82 152.14L100.07 151.66M98.48 156.30L100.77 156.06M95.00 160.50L101.00 160.50M98.48 164.70L100.77 164.94M97.82 168.86L100.07 169.34M96.73 172.92L98.92 173.63M95.22 176.85L97.33 177.79M90.11 178.75L95.31 181.75M91.02 184.13L92.88 185.48M88.37 187.40L90.08 188.94M85.40 190.37L86.94 192.08M82.13 193.02L83.48 194.88M76.75 192.11L79.75 197.31M74.85 197.22L75.79 199.33M70.92 198.73L71.63 200.92M66.86 199.82L67.34 202.07M62.70 200.48L62.94 202.77M58.50 197.00L58.50 203.00M54.30 200.48L54.06 202.77M50.14 199.82L49.66 202.07M46.08 198.73L45.37 200.92M42.15 197.22L41.21 199.33M40.25 192.11L37.25 197.31M34.87 193.02L33.52 194.88M31.60 190.37L30.06 192.08M28.63 187.40L26.92 188.94M25.98 184.13L24.12 185.48M26.89 178.75L21.69 181.75M21.78 176.85L19.67 177.79M20.27 172.92L18.08 173.63M19.18 168.86L16.93 169.34M18.52 164.70L16.23 164.94M22.00 160.50L16.00 160.50M18.52 156.30L16.23 156.06M19.18 152.14L16.93 151.66M20.27 148.08L18.08 147.37M21.78 144.15L19.67 143.21M26.89 142.25L21.69 139.25M25.98 136.87L24.12 135.52M28.63 133.60L26.92 132.06M31.60 130.63L30.06 128.92M34.87 127.98L33.52 126.12M40.25 128.89L37.25 123.69M42.15 123.78L41.21 121.67M46.08 122.27L45.37 120.08M50.14 121.18L49.66 118.93M54.30 120.52L54.06 118.23" stroke="#e3e9f2" stroke-width="1" fill="none"/>
<path d="M32 148L57.500 156.200L61.500 159.300L55.500 161.300Z" fill="#a3b3cb"/>
<path d="M51 176L55.500 160.500L61.500 159.300L59.800 163.500Z" fill="#a3b3cb"/>
<path d="M8 282L8.0 253.0L10.5 250.0L13.0 256.0L17.0 263.0L18.5 259.0L22.5 261.0L24.0 255.0L25.5 245.0L29.0 244.0L32.0 243.0L34.5 243.0L37.0 247.0L42.0 254.0L46.0 257.0L48.5 260.0L50.0 256.0L52.0 254.0L54.5 254.5L57.0 260.0L60.0 263.0L63.0 263.0L66.0 258.0L70.0 253.0L71.0 252.0L72.0 256.0L74.0 255.0L75.0 247.0L76.5 241.0L78.5 241.0L80.0 244.5L82.0 244.0L84.0 239.0L85.5 236.0L86.5 239.0L87.5 238.0L88.5 244.0L90.0 241.0L91.0 245.0L93.5 251.0L96.0 259.0L98.5 265.0L102.0 268.0L106.0 271.0L108.0 272.0L108 282Z" fill="#a4b4cc"/>
<rect x="8.00" y="246.00" width="100.00" height="1.00" fill="#c6d6ef"/>
<rect x="8.00" y="257.00" width="100.00" height="1.00" fill="#c6d6ef"/>
<rect x="8.00" y="268.00" width="100.00" height="1.00" fill="#c6d6ef"/>
<text x="11.500" y="231" font-family="Liberation Sans" font-size="11.500" font-weight="bold" fill="#c9d5e8">v1</text>
<rect x="149.00" y="1019.00" width="60.00" height="17.00" fill="#6e7d93"/>
<rect x="149.00" y="1019.00" width="60.00" height="1.50" fill="#aab7ca"/>
<rect x="149.00" y="1019.00" width="1.50" height="17.00" fill="#aab7ca"/>
<rect x="149.00" y="1034.50" width="60.00" height="1.50" fill="#3b424c"/>
<text x="182" y="1031.500" font-family="Liberation Sans" font-size="11.500" fill="#000" text-anchor="middle">330</text>
<path d="M176.500 981h27a1.500 1.500 0 0 1 1.500 1.500V1003H175V982.500a1.500 1.500 0 0 1 1.500-1.500z" fill="#dcdcdc"/>
<rect x="178.500" y="984" width="23.500" height="16" rx="1.500" fill="#556b2f"/>
<path d="M180 986.500h2M183 986.500h1M186 986.500h5M193.500 986.500h1M180 988.500h4M185.500 988.500h5M180 990.500h16M180 992.500h3M184.500 992.500h3M189 992.500h2M193 992.500h3M180 994.500h1M180 996.500h4M185.500 996.500h1M187.500 996.500h3M191 996.500h1M180 998.500h1M182 998.500h4" stroke="#f4f4f4" stroke-width="1" fill="none"/>
<rect x="177.00" y="1003.00" width="28.00" height="2.00" fill="#bdbdbd"/>
<rect x="178.00" y="1005.00" width="27.00" height="3.00" fill="#e4e4e4"/>
<rect x="196.00" y="1006.00" width="7.00" height="1.00" fill="#222"/>
<path d="M176 1008h26l-5 6.500h-27z" fill="#e8e8e8"/><path d="M176 1010h20" stroke="#fff" stroke-width="1.500"/><path d="M170 1014.500h27l5-6.500v1.500l-5 6.500h-27z" fill="#bdbdbd"/>
<path d="M152 984h10l21 21.700h-10z" fill="#f00"/><path d="M178 984h3.500L155.500 1007H152z" fill="#f00"/>
</svg><!--/desk-->

<div id="win">
 <div class="nh" style="left:0;top:25px"></div><div class="nh" style="left:1340px;top:25px"></div>
 <div class="nh" style="left:0;top:1022px"></div><div class="nh" style="left:1340px;top:1022px"></div>
 <div class="nv" style="left:27px;top:0"></div><div class="nv" style="left:1316px;top:0"></div>
 <div class="nv" style="left:27px;top:1046px"></div><div class="nv" style="left:1316px;top:1046px"></div>
  <div id="content">
  <div id="tabbar">
   <div class="abs" style="left:0;top:0;width:224px;height:2px;background:#1f7be0"></div>
   <div class="abs" style="left:224px;top:0;width:1108px;height:32px;border-left:1px solid #999;border-bottom:1px solid #9c9c9c"></div>
   <svg class="abs" style="left:8px;top:7px" width="18" height="18" viewBox="220 12 18 18"><path d="M221.400 19.100A8.840 8.840 0 0 1 236.800 19.100A19.300 19.300 0 0 0 221.400 19.100ZM221.400 24.600A8.660 8.660 0 0 0 236.800 24.600A13.100 13.100 0 0 1 221.400 24.600Z" fill="#f37726"/></svg>
   <div class="abs ff" style="left:31px;top:6px;font-size:14.4px;color:#2c3035">JupyterLab</div>
   <svg class="abs" style="left:201px;top:10px" width="12" height="12" viewBox="0 0 12 12"><path d="M1.900 1.900L10.100 10.100M10.100 1.900L1.900 10.100" stroke="#3c4045" stroke-width="1.500" stroke-linecap="round" fill="none"/></svg>
   <svg class="abs" style="left:233px;top:8px" width="18" height="15" viewBox="0 0 18 15"><defs><linearGradient id="dg" x1="0" y1="0" x2="0" y2="1"><stop offset="0" stop-color="#ededed"/><stop offset=".55" stop-color="#d9d9d9"/><stop offset="1" stop-color="#c4c4c8"/></linearGradient></defs><path d="M3 1h11l3 8v4.5H1V9z" fill="url(#dg)" stroke="#bdbdbd" stroke-width=".6"/><ellipse cx="8.5" cy="4.5" rx="5" ry="2.3" fill="#f4f4f4"/><rect x="1" y="9" width="16" height="4.5" fill="#d5d5da"/><rect x="13.6" y="10.6" width="1.6" height="1.6" fill="#3fae3f"/></svg>
   <div class="abs ff" style="left:256px;top:6px;font-size:15.2px;color:#2c3035;width:166px;overflow:hidden;-webkit-mask-image:linear-gradient(to right,#000 138px,transparent 165px)">Index of file:///x/libb/home</div>
   <svg class="abs" style="left:427px;top:10px" width="12" height="12" viewBox="0 0 12 12"><path d="M1.900 1.900L10.100 10.100M10.100 1.900L1.900 10.100" stroke="#3c4045" stroke-width="1.500" stroke-linecap="round" fill="none"/></svg>
   <div class="abs" style="left:449px;top:5px;width:1px;height:23px;background:#c4c0ba"></div>
   <svg class="abs" style="left:458px;top:7px" width="16" height="16" viewBox="0 0 16 16"><path d="M8 1.2V14.8M1.2 8H14.8" stroke="#3c4045" stroke-width="1.7" stroke-linecap="round"/></svg>
  </div>
  <div id="navbar">
   <div class="abs" style="left:3.2px;top:3.2px;width:33.4px;height:33.4px;border-radius:50%;background:#fdfdfd;border:1px solid #a3a3a3"></div>
   <svg class="abs" style="left:12px;top:12px" width="16" height="16" viewBox="0 0 16 16"><path d="M15 7H3.414l4.293-4.293a1 1 0 0 0-1.414-1.414l-6 6a1 1 0 0 0 0 1.414l6 6a1 1 0 0 0 1.414-1.414L3.414 9H15a1 1 0 0 0 0-2z" fill="#3b4045"/></svg>
   <svg class="abs" style="left:45px;top:12px" width="16" height="16" viewBox="0 0 16 16"><path transform="translate(16,0) scale(-1,1)" d="M15 7H3.414l4.293-4.293a1 1 0 0 0-1.414-1.414l-6 6a1 1 0 0 0 0 1.414l6 6a1 1 0 0 0 1.414-1.414L3.414 9H15a1 1 0 0 0 0-2z" fill="#a9abac"/></svg>
   <svg class="abs" style="left:77px;top:12px" width="16" height="16" viewBox="0 0 16 16"><path d="M15 1a1 1 0 0 0-1 1v2.418A6.995 6.995 0 1 0 8 15a6.954 6.954 0 0 0 4.950-2.050 1 1 0 0 0-1.414-1.414A5.019 5.019 0 1 1 12.549 6H10a1 1 0 0 0 0 2h5a1 1 0 0 0 1-1V2a1 1 0 0 0-1-1z" fill="#3b4045"/></svg>
   <svg class="abs" style="left:109px;top:12px" width="16" height="16" viewBox="0 0 16 16"><path d="M15.707 7.293l-7-7a1 1 0 0 0-1.414 0l-7 7a1 1 0 0 0 1.414 1.414L2 8.414V15a1 1 0 0 0 1 1h10a1 1 0 0 0 1-1V8.414l.293.293a1 1 0 0 0 1.414-1.414zM12 14H4V6.414l4-4 4 4z" fill="#3b4045"/><path d="M6.300 9h3.400v5H6.300z M7.600 10.600h.9v1.800h-.9z" fill="#3b4045" fill-rule="evenodd"/></svg>
   <div class="abs" style="left:233px;top:5px;width:858px;height:30px;background:#fff;border:1px solid #c9c4be;border-radius:4px"></div>
   <svg class="abs" style="left:240.400px;top:12px" width="15" height="15.500" viewBox="0 0 16 16" preserveAspectRatio="none"><path d="M8 1.300C5.800 2.500 3.900 2.800 2.200 2.900v4.600c0 3.400 2.400 5.900 5.800 7.200 3.400-1.300 5.800-3.800 5.800-7.200V2.900C12.100 2.800 10.200 2.500 8 1.300z" fill="none" stroke="#4a4d52" stroke-width="1.5" stroke-linejoin="round"/><path d="M8 4.200C7.200 4.600 6.500 4.800 5.800 4.900v2.800c0 1.500.8 2.700 2.200 3.600z" fill="#4a4d52"/></svg>
   <div class="abs" style="left:262px;top:9px;width:1px;height:22px;background:#cfcac5"></div>
   <svg class="abs" style="left:268.500px;top:10.500px" width="17" height="17" viewBox="0 0 16 16"><path d="M3.600 1.200h5.400l4.300 4.300v8.300a1 1 0 0 1-1 1H3.600a1 1 0 0 1-1-1V2.200a1 1 0 0 1 1-1zM8.700 1.500v4.300h4.300" fill="none" stroke="#4a4d52" stroke-width="1.800" stroke-linejoin="round"/></svg>
   <div class="abs ff" style="left:293.8px;top:10px;font-size:15.9px;color:#1b1c1e">localhost<span style="color:#7c7d80">:8888/lab</span></div>
   <div class="abs ff" style="left:938px;top:11px;width:50px;height:18px;border:1px solid #c7c7c7;border-radius:9px;background:#ececec;font-size:12.4px;line-height:16px;text-align:center;text-indent:-2px;color:#1b1c1e">170%</div>
   <div class="abs" style="left:1001px;top:9px;width:1px;height:22px;background:#cfcac5"></div>
   <svg class="abs" style="left:1013px;top:12px" width="16" height="16" viewBox="0 0 16 16"><circle cx="2.500" cy="8" r="1.750" fill="#4a4d52"/><circle cx="8" cy="8" r="1.750" fill="#4a4d52"/><circle cx="13.500" cy="8" r="1.750" fill="#4a4d52"/></svg>
   <svg class="abs" style="left:1041px;top:12px" width="16" height="16" viewBox="0 0 16 16"><path d="M1.800 2h12.400a1 1 0 0 1 1 1v4.200a7.200 7.200 0 0 1-14.400 0V3a1 1 0 0 1 1-1z" fill="none" stroke="#4a4d52" stroke-width="1.500"/><path d="M4.800 6.300L8 9.400l3.200-3.100" fill="none" stroke="#4a4d52" stroke-width="1.700" stroke-linecap="round" stroke-linejoin="round"/></svg>
   <svg class="abs" style="left:1069px;top:11px" width="17" height="17" viewBox="0 0 16 16"><path d="M8 1.300l2.050 4.300 4.650.62-3.400 3.250.85 4.650L8 11.850 3.850 14.120l.85-4.650L1.300 6.220l4.650-.62z" fill="none" stroke="#4a4d52" stroke-width="1.400" stroke-linejoin="round"/></svg>
   <svg class="abs" style="left:1200px;top:12px" width="17" height="16" viewBox="0 0 17 16"><path d="M1.500 1.500v13M5 1.500v13M8.500 1.500v13M11 2.200l4.500 12.300" stroke="#3b4045" stroke-width="1.600" stroke-linecap="round" fill="none"/></svg>
   <svg class="abs" style="left:1232px;top:12px" width="17" height="16" viewBox="0 0 17 16"><rect x=".8" y="1.800" width="15.400" height="12.400" rx="2" fill="none" stroke="#3b4045" stroke-width="1.500"/><path d="M7.500 2v12" stroke="#3b4045" stroke-width="1.400"/><path d="M2.800 4.500h2.800M2.800 6.800h2.800M2.800 9.100h2.800" stroke="#3b4045" stroke-width="1"/></svg>
   <svg class="abs" style="left:1263px;top:9px" width="22" height="20" viewBox="0 0 22 20"><circle cx="9" cy="11" r="6.800" fill="none" stroke="#3b4045" stroke-width="1.400"/><circle cx="9" cy="9.300" r="2.500" fill="#3b4045"/><path d="M4.300 15.200c.8-2.400 2.600-3.200 4.700-3.200s3.900.8 4.700 3.200a6.500 6.500 0 0 1-9.400 0z" fill="#3b4045"/><circle cx="17.300" cy="3.500" r="3" fill="#0fa3f5"/></svg>
   <div class="abs" style="left:1291px;top:4px;width:1px;height:33px;background:#dedad6"></div>
   <svg class="abs" style="left:1306px;top:12px" width="14" height="16" viewBox="0 0 14 16"><path d="M1 2.800h12M1 8h12M1 13.200h12" stroke="#3b4045" stroke-width="1.700" stroke-linecap="round"/></svg>
  </div>
  <div id="menubar">
   <svg class="abs" style="left:8px;top:3px" width="46" height="44" viewBox="220 82 46 44"><path d="M227.200 96.600A13.840 13.840 0 0 1 252.900 96.600A20.250 20.250 0 0 0 227.200 96.600ZM227.200 107.100A13.780 13.780 0 0 0 252.900 107.100A19.600 19.600 0 0 1 227.200 107.100Z" fill="#f47a00"/><circle cx="250.100" cy="87.300" r="2.050" fill="#616161"/><circle cx="227.600" cy="90.100" r="1.400" fill="#616161"/><circle cx="229.800" cy="117.700" r="2.650" fill="#616161"/></svg>
      <div class="menu" style="left:67.7px;transform:scaleX(0.890)">File</div>
   <div class="menu" style="left:136.3px;transform:scaleX(0.920)">Edit</div>
   <div class="menu" style="left:211.2px;transform:scaleX(0.888)">View</div>
   <div class="menu" style="left:293.4px;transform:scaleX(0.899)">Run</div>
   <div class="menu" style="left:368.0px;transform:scaleX(0.916)">Kernel</div>
   <div class="menu" style="left:471.9px;transform:scaleX(0.918)">Tabs</div>
   <div class="menu" style="left:554.3px;transform:scaleX(0.918)">Settings</div>
   <div class="menu" style="left:675.2px;transform:scaleX(0.913)">Help</div>
  </div>
  <div id="side">
   <svg class="abs" style="left:10.5px;top:27.0px" width="34" height="34" viewBox="0 0 24 24"><path d="M10 4H4c-1.100 0-1.990.900-1.990 2L2 18c0 1.100.900 2 2 2h16c1.100 0 2-.900 2-2V8c0-1.100-.900-2-2-2h-8l-2-2z" fill="#616161"/></svg>
   <svg class="abs" style="left:10.3px;top:117.0px" width="34" height="34" viewBox="0 0 512 512"><path d="M256 8C119 8 8 119 8 256s111 248 248 248 248-111 248-248S393 8 256 8zm96 328c0 8.800-7.200 16-16 16H176c-8.800 0-16-7.200-16-16V176c0-8.800 7.200-16 16-16h160c8.800 0 16 7.200 16 16v160z" fill="#616161"/></svg>
   <svg class="abs" style="left:10.5px;top:208.9px" width="34" height="34" viewBox="0 0 34 34"><defs><mask id="pm"><rect x="0" y="0" width="34" height="34" fill="#fff"/><circle cx="21.800" cy="7.500" r="9.100" fill="#000"/><path d="M25.800 11.500L34 19.700" stroke="#000" stroke-width="6.200"/></mask></defs>
<g mask="url(#pm)"><rect x="2.500" y="4.400" width="26" height="25.300" rx="2.200" fill="#616161"/>
<g fill="#eee"><rect x="7.300" y="9.300" width="3.300" height="3.300"/><rect x="7.300" y="15.200" width="3.300" height="3.300"/><rect x="7.300" y="21.100" width="3.300" height="3.300"/><rect x="12.600" y="15.200" width="8" height="3.300"/><rect x="12.600" y="21.100" width="11.500" height="3.300"/><rect x="4.500" y="6.300" width="8.800" height="1"/><rect x="4.500" y="26.400" width="21" height="1"/></g></g>
<circle cx="21.800" cy="7.500" r="4.650" fill="none" stroke="#616161" stroke-width="2.800"/><path d="M25.600 11.300l5 5" stroke="#616161" stroke-width="2.800" stroke-linecap="butt"/></svg>
   <svg class="abs" style="left:10.5px;top:298.0px" width="34" height="34" viewBox="0 0 34 34"><path d="M13.46 7.23L15.35 7.30L15.35 10.10L13.46 10.17L12.55 11.74L13.43 13.41L11.01 14.81L10.01 13.21L8.19 13.21L7.19 14.81L4.77 13.41L5.65 11.74L4.74 10.17L2.85 10.10L2.85 7.30L4.74 7.23L5.65 5.66L4.77 3.99L7.19 2.59L8.19 4.19L10.01 4.19L11.01 2.59L13.43 3.99L12.55 5.66ZM6.80 8.70a2.30 2.30 0 1 0 4.60 0a2.30 2.30 0 1 0 -4.60 0Z" fill="#616161" fill-rule="evenodd" stroke="#616161" stroke-width="0.800" stroke-linejoin="round"/><path d="M28.26 22.74L30.64 24.29L28.46 28.07L25.93 26.78L23.43 28.22L23.28 31.06L18.92 31.06L18.77 28.22L16.27 26.78L13.74 28.07L11.56 24.29L13.94 22.74L13.94 19.86L11.56 18.31L13.74 14.53L16.27 15.82L18.77 14.38L18.92 11.54L23.28 11.54L23.43 14.38L25.93 15.82L28.46 14.53L30.64 18.31L28.26 19.86ZM17.40 21.30a3.70 3.70 0 1 0 7.40 0a3.70 3.70 0 1 0 -7.40 0Z" fill="#616161" fill-rule="evenodd" stroke="#616161" stroke-width="0.800" stroke-linejoin="round"/></svg>
   <svg class="abs" style="left:10.4px;top:388.0px" width="34" height="34" viewBox="0 0 34 34"><rect x="2.600" y="5.400" width="28.600" height="23.300" rx="2.500" fill="none" stroke="#616161" stroke-width="2.700"/><path d="M18.500 4.100h11.500a2.500 2.500 0 0 1 2.500 2.500v6.200H18.500z" fill="#616161"/></svg>
   <svg class="abs" style="left:10.8px;top:478.0px" width="34" height="34" viewBox="0 0 24 24"><path d="M20.500 11H19V7c0-1.100-.900-2-2-2h-4V3.500C13 2.120 11.880 1 10.500 1S8 2.120 8 3.500V5H4c-1.100 0-1.990.900-1.990 2v3.800H3.500c1.490 0 2.700 1.210 2.700 2.700s-1.210 2.700-2.700 2.700H2V20c0 1.100.900 2 2 2h3.800v-1.500c0-1.490 1.210-2.700 2.700-2.700 1.490 0 2.700 1.210 2.700 2.700V22H17c1.100 0 2-.900 2-2v-4h1.500c1.380 0 2.500-1.120 2.500-2.500S21.880 11 20.500 11z" fill="#616161"/></svg>
  </div>
  <div id="dock"></div>
  <div id="panel">
   <div id="nbtool">
    <svg class="abs" style="left:15.9px;top:11.4px" width="27.2" height="27.2" viewBox="0 0 24 24"><path d="M17 3H5c-1.110 0-2 .900-2 2v14c0 1.100.890 2 2 2h14c1.100 0 2-.900 2-2V7l-4-4zm-5 16c-1.660 0-3-1.340-3-3s1.340-3 3-3 3 1.340 3 3-1.340 3-3 3zm3-10H5V5h10v4z" fill="#616161"/></svg>
    <svg class="abs" style="left:67.3px;top:11.4px" width="27.2" height="27.2" viewBox="0 0 24 24"><path d="M19 13h-6v6h-2v-6H5v-2h6V5h2v6h6v2z" fill="#616161"/></svg>
    <svg class="abs" style="left:117.9px;top:11.4px" width="27.2" height="27.2" viewBox="0 0 24 24"><path d="M9.640 7.640c.230-.500.360-1.050.360-1.640 0-2.210-1.790-4-4-4S2 3.790 2 6s1.790 4 4 4c.590 0 1.140-.130 1.640-.360L10 12l-2.360 2.360C7.140 14.130 6.590 14 6 14c-2.210 0-4 1.790-4 4s1.790 4 4 4 4-1.790 4-4c0-.590-.130-1.140-.360-1.640L12 14l7 7h3v-1L9.640 7.640zM6 8c-1.100 0-2-.890-2-2s.900-2 2-2 2 .890 2 2-.900 2-2 2zm0 12c-1.100 0-2-.890-2-2s.900-2 2-2 2 .890 2 2-.900 2-2 2zm6-7.500c-.280 0-.500-.220-.500-.500s.220-.500.500-.500.500.220.500.500-.220.500-.500.500zM19 3l-6 6 2 2 7-7V3z" fill="#616161"/></svg>
    <svg class="abs" style="left:170.1px;top:11.4px" width="27.2" height="27.2" viewBox="0 0 24 24"><path d="M16 1H4c-1.100 0-2 .900-2 2v14h2V3h12V1zm3 4H8c-1.100 0-2 .900-2 2v14c0 1.100.900 2 2 2h11c1.100 0 2-.900 2-2V7c0-1.100-.900-2-2-2zm0 16H8V7h11v14z" fill="#616161"/></svg>
    <svg class="abs" style="left:220.7px;top:11.4px" width="27.2" height="27.2" viewBox="0 0 24 24"><path d="M19 2h-4.180C14.400.840 13.300 0 12 0c-1.300 0-2.400.840-2.820 2H5c-1.100 0-2 .900-2 2v16c0 1.100.900 2 2 2h14c1.100 0 2-.900 2-2V4c0-1.100-.900-2-2-2zm-7 0c.550 0 1 .450 1 1s-.450 1-1 1-1-.450-1-1 .450-1 1-1zm7 18H5V4h2v3h10V4h2v16z" fill="#616161"/></svg>
    <svg class="abs" style="left:272.9px;top:11.4px" width="27.2" height="27.2" viewBox="0 0 24 24"><path d="M8 5v14l11-7z" fill="#616161"/></svg>
    <svg class="abs" style="left:324.3px;top:11.4px" width="27.2" height="27.2" viewBox="0 0 24 24"><path d="M6 6h12v12H6z" fill="#616161"/></svg>
    <svg class="abs" style="left:375.7px;top:11.4px" width="27.2" height="27.2" viewBox="0 0 24 24"><path d="M17.650 6.350C16.200 4.900 14.210 4 12 4c-4.420 0-7.990 3.580-7.990 8s3.570 8 7.990 8c3.730 0 6.840-2.550 7.730-6h-2.080c-.820 2.330-3.040 4-5.650 4-3.310 0-6-2.690-6-6s2.690-6 6-6c1.660 0 3.140.690 4.220 1.780L13 11h7V4l-2.350 2.350z" fill="#616161"/></svg>
    <svg class="abs" style="left:427.1px;top:11.4px" width="27.2" height="27.2" viewBox="0 0 24 24"><path d="M4 18l8.500-6L4 6v12zm9-12v12l8.500-6L13 6z" fill="#616161"/></svg>
    <div class="abs ff" style="left:492px;top:10px;font-size:23.5px;line-height:28px;color:#000">Code</div>
    <svg class="abs" style="left:625px;top:20px" width="16" height="10" viewBox="0 0 16 10"><path d="M1.500 1.500L8 8l6.500-6.500" fill="none" stroke="#444" stroke-width="1.900"/></svg>
    <div class="abs ff" style="left:1102px;top:10px;font-size:23.5px;line-height:28px;color:#222;transform:scaleX(1.028);transform-origin:0 0">Julia 1.5.2</div>
    <svg class="abs" style="left:1227px;top:11px" width="25" height="25" viewBox="0 0 25 25"><circle cx="12.700" cy="12.500" r="10.400" fill="none" stroke="#4f4f4f" stroke-width="2.100"/></svg>
   </div>
   <div class="abs" style="left:1244px;top:49px;width:12px;height:810px;background:#efeeec;border-left:1px solid #dcd8d4"></div>
   <div class="abs" style="left:1247px;top:338px;width:6px;height:119px;border-radius:3px;background:#cecece"></div>
   <div id="nb">
<div class="mono" style="left:157.4px;top:33.0px"> 0.214093   -0.0742856  0.0876376   0.167663</div>
<div class="mono" style="left:157.4px;top:60.0px"> 0.0234619  -0.145435   0.167663    0.947423</div>
<div class="inp" style="top:103.0px;height:48px"></div>
<div class="mono pr" style="left:72.4px;top:114.0px">[14]:</div>
<div class="mono" style="left:157.4px;top:114.0px">A<b class="op star">*</b>C<b class="op star">*</b>b</div>
<div class="mono pr" style="left:72.4px;top:169.0px">[14]:</div>
<div class="mono" style="left:157.4px;top:169.0px">4-element Array{Float64,1}:</div>
<div class="mono" style="left:157.4px;top:196.0px"> 2.229757809040192</div>
<div class="mono" style="left:157.4px;top:223.0px"> 0.39673125572162493</div>
<div class="mono" style="left:157.4px;top:250.0px"> 1.2943873145933995</div>
<div class="mono" style="left:157.4px;top:277.0px"> 4.025272368804049</div>
<div class="inp" style="top:320.0px;height:48px"></div>
<div class="mono pr" style="left:72.4px;top:331.5px">[15]:</div>
<div class="hl" style="left:157.0px;top:330.0px;width:107.7px;height:29px"></div>
<div class="mono" style="left:157.4px;top:331.5px">xmin<b class="op">=</b>C<b class="op star">*</b>b</div>
<div class="mono pr" style="left:72.4px;top:387.0px">[15]:</div>
<div class="mono" style="left:157.4px;top:387.0px">2-element Array{Float64,1}:</div>
<div class="mono" style="left:157.4px;top:414.0px"> 4.0340601737045505</div>
<div class="mono" style="left:157.4px;top:441.0px"> 0.9218210629597332</div>
<div class="inp" style="top:484.0px;height:48px"></div>
<div class="mono pr" style="left:72.4px;top:495.3px">[16]:</div>
<div class="hl" style="left:157.0px;top:493.3px;width:94.3px;height:29px"></div>
<div class="mono" style="left:157.4px;top:495.3px"><span class="fn">f</span>(xmin)</div>
<div class="mono pr" style="left:72.4px;top:549.8px">[16]:</div>
<div class="mono" style="left:157.4px;top:549.8px">2.6443389080297885</div>
<div class="inp" style="top:606.0px;height:48px"></div>
<div class="mono pr" style="left:72.4px;top:618.3px">[17]:</div>
<div class="hl" style="left:157.0px;top:616.0px;width:107.7px;height:29px"></div>
<div class="mono" style="left:157.4px;top:618.3px"><span class="fn">f</span>([<span class="fn">4</span>,<span class="fn">1</span>])</div>
<div class="mono pr" style="left:72.4px;top:672.6px">[17]:</div>
<div class="mono" style="left:157.4px;top:672.6px">2.6453388120969006</div>
<div class="inp" style="top:728.5px;height:48px"></div>
<div class="mono pr" style="left:72.4px;top:740.3px">[18]:</div>
<div class="hl" style="left:157.0px;top:738.0px;width:134.5px;height:29px"></div>
<div class="mono" style="left:157.4px;top:740.3px"><span class="fn">f</span>([<span class="fn">4</span>,<span class="fn">0.9</span>])</div>
<div class="mono pr" style="left:72.4px;top:794.7px">[18]:</div>
<div class="mono" style="left:157.4px;top:794.7px">2.6448876850092713</div>
</div><!--/nb-->
  </div>
  <div id="status">
   <div class="st" style="left:31.0px">0</div>
   <svg class="abs" style="left:63px;top:10px" width="26" height="26" viewBox="0 0 26 26"><rect x="0" y="0" width="26" height="26" rx="1.500" fill="#3d3d3d"/><text x="3" y="19" font-family="Liberation Sans" font-size="17" fill="#fff">$</text><rect x="14.500" y="18.200" width="7.500" height="2.200" fill="#fff"/></svg>
   <div class="st" style="left:105.3px;transform:scaleX(0.900)">2</div>
   <svg class="abs" style="left:136px;top:8px" width="26" height="26" viewBox="0 0 26 26"><g stroke="#424242" stroke-width="2.200" fill="none"><rect x="4.600" y="4.600" width="16.800" height="16.800" rx="2"/><rect x="9.600" y="9.600" width="6.800" height="6.800"/><path d="M9 1v4M13 1v4M17 1v4M9 21v4M13 21v4M17 21v4M1 9h4M1 13h4M1 17h4M21 9h4M21 13h4M21 17h4"/></g></svg>
   <div class="st" style="left:194.7px;transform:scaleX(0.909)">Julia 1.5.2 | Idle</div>
   <div class="st" style="left:423.0px;transform:scaleX(0.930)">Saving completed</div>
   <div class="st" style="left:678.7px;transform:scaleX(0.913)">Mode: Command</div>
   <svg class="abs" style="left:895px;top:7px" width="28" height="28" viewBox="0 0 28 28"><path d="M14 2.500L3.800 6.400v7.300c0 5.600 4 9.600 10.200 12 6.200-2.400 10.200-6.400 10.200-12V6.400z" fill="none" stroke="#424242" stroke-width="2.100" stroke-linejoin="round"/><path d="M9.800 9.800l8.400 8.400M18.200 9.800l-8.400 8.400" stroke="#424242" stroke-width="2.300"/></svg>
   <div class="st" style="left:952.0px;transform:scaleX(0.893)">Ln 1, Col 1</div>
   <div class="st" style="left:1095.3px;transform:scaleX(0.936)">leastsquares.ipynb</div>
  </div>
 </div>
</div>
</body>
</html>
